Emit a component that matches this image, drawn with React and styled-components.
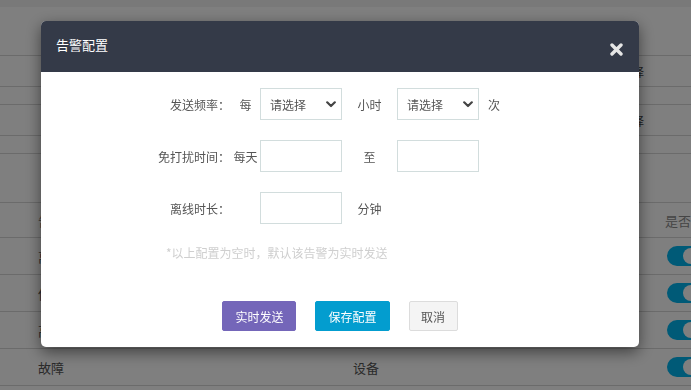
import React from 'react'
import styled, { createGlobalStyle } from 'styled-components'

const GlobalStyle = createGlobalStyle`
  html, body {
    margin: 0;
    padding: 0;
    background: #fff;
  }
  body {
    font-family: "Noto Sans CJK SC", "Noto Sans", sans-serif;
    font-size: 12px;
    color: #555;
    overflow: hidden;
  }
`

const rows = [
    { type: '离线', target: '设备' },
    { type: '低电量', target: '设备' },
    { type: '高温', target: '设备' },
    { type: '故障', target: '设备' },
]

function Chevron() {
    return (
        <svg width="10" height="7" viewBox="0 0 10 7">
            <path d="M1.2 1.3 L5 5 L8.8 1.3" fill="none" stroke="#444" strokeWidth="2.2" strokeLinecap="round" strokeLinejoin="round" />
        </svg>
    )
}

function Select() {
    return (
        <SelectWrap>
            <NativeSelect defaultValue="">
                <option value="">请选择</option>
                <option value="1">1</option>
                <option value="2">2</option>
            </NativeSelect>
            <Arrow><Chevron /></Arrow>
        </SelectWrap>
    )
}

function App() {
    return (
        <>
            <GlobalStyle />
            <Page>
                <TopBand />
                <BgRow h={49} />
                <BgRow h={31}><CutText>请选择</CutText></BgRow>
                <BgRow h={18} />
                <BgRow h={31}><CutText>请选择</CutText></BgRow>
                <BgRow h={18} />
                <BgRow h={49} />
                <TableRow head>
                    <span>告警类型</span>
                    <span>告警对象</span>
                    <span>是否启用</span>
                </TableRow>
                {rows.map(r => (
                    <TableRow key={r.type}><span>{r.type}</span><span>{r.target}</span><Toggle /></TableRow>
                ))}
            </Page>

            <Overlay>
                <Modal>
                    <Header>
                        <Title>告警配置</Title>
                        <Close aria-label="close">
                            <svg width="13" height="13" viewBox="0 0 13 13">
                                <path d="M2 2 L11 11 M11 2 L2 11" stroke="#e6e6e6" strokeWidth="3.4" strokeLinecap="round" />
                            </svg>
                        </Close>
                    </Header>
                    <Body>
                        <FormGrid>
                            <Label>发送频率：</Label>
                            <Prefix>每</Prefix>
                            <Select />
                            <Mid>小时</Mid>
                            <Select />
                            <Suffix>次</Suffix>

                            <Label>免打扰时间：</Label>
                            <Prefix>每天</Prefix>
                            <Input />
                            <Mid>至</Mid>
                            <Input />
                            <Suffix />

                            <Label>离线时长：</Label>
                            <Prefix />
                            <Input />
                            <Mid>分钟</Mid>
                            <span />
                            <Suffix />
                        </FormGrid>
                        <Hint>*以上配置为空时，默认该告警为实时发送</Hint>
                        <Footer>
                            <Button kind="purple">实时发送</Button>
                            <Button kind="blue">保存配置</Button>
                            <Button kind="plain">取消</Button>
                        </Footer>
                    </Body>
                </Modal>
            </Overlay>
        </>
    )
}

export default App;


const Page = styled.div`
    width: 100%;
    height: 390px;
    background: #fff;
`
const TopBand = styled.div`
    height: 7px;
    background: #f3f3f3;
`
const BgRow = styled.div`
    height: ${props => props.h}px;
    box-sizing: border-box;
    border-bottom: 1px solid #d6d6d6;
    display: flex;
    align-items: center;
    padding-left: 608px;
    color: #444;
    font-size: 12px;
`
const CutText = styled.span`
    white-space: nowrap;
`
const TableRow = styled.div`
    height: ${props => props.head ? 35 : 37}px;
    box-sizing: border-box;
    border-bottom: 1px solid #d6d6d6;
    display: grid;
    grid-template-columns: 315px 312px 1fr;
    align-items: center;
    padding-left: 38px;
    font-size: 13px;
    color: ${props => props.head ? '#8a8a8a' : '#555'};
    white-space: nowrap;
`
const Toggle = styled.div`
    width: 40px;
    height: 20px;
    border-radius: 10px;
    background: #00b4ee;
    position: relative;
    margin-left: 2px;
    &::after{
        content: '';
        position: absolute;
        top: 2px;
        left: 16px;
        width: 16px;
        height: 16px;
        border-radius: 50%;
        background: #fff;
    }
`

const Overlay = styled.div`
    position: fixed;
    inset: 0;
    background: rgba(0, 0, 0, .5);
    padding: 21px 0 0 41px;
    box-sizing: border-box;
`
const Modal = styled.div`
    width: 598px;
    background: #fff;
    border-radius: 5px;
    overflow: hidden;
    box-shadow: 0 5px 15px rgba(0, 0, 0, .5);
`
const Header = styled.div`
    height: 51px;
    background: #343a48;
    display: flex;
    align-items: center;
    justify-content: space-between;
    padding: 0 16px 0 15px;
`
const Title = styled.div`
    color: #fff;
    font-size: 13px;
    margin-top: -4px;
`
const Close = styled.button`
    border: 0;
    background: none;
    padding: 0;
    margin-top: 5px;
    display: flex;
    cursor: pointer;
`
const Body = styled.div`
    padding: 16px 0 16px;
`
const FormGrid = styled.div`
    display: grid;
    grid-template-columns: 189px 30px 82px 55px 82px auto;
    row-gap: 20px;
    align-items: center;
    color: #555;
    font-size: 12px;
`
const Label = styled.div`
    text-align: right;
    white-space: nowrap;
`
const Prefix = styled.div`
    text-align: center;
    white-space: nowrap;
    padding-left: 1px;
`
const Mid = styled.div`
    text-align: center;
`
const Suffix = styled.div`
    padding-left: 9px;
`
const Input = styled.input`
    width: 82px;
    height: 32px;
    box-sizing: border-box;
    border: 1px solid #d2dddd;
    outline: none;
    padding: 0 8px;
    font: inherit;
`
const SelectWrap = styled.div`
    position: relative;
    width: 82px;
    height: 32px;
`
const NativeSelect = styled.select`
    appearance: none;
    width: 100%;
    height: 100%;
    box-sizing: border-box;
    border: 1px solid #d2dddd;
    border-radius: 0;
    background: #fff;
    padding: 0 0 0 9px;
    font-family: inherit;
    font-size: 12px;
    color: #555;
    outline: none;
`
const Arrow = styled.span`
    position: absolute;
    right: 6px;
    top: 13px;
    display: flex;
    pointer-events: none;
`
const Hint = styled.div`
    margin-top: 20px;
    padding-left: 125px;
    color: #cfcfcf;
    font-size: 12px;
    line-height: 17px;
`
const Footer = styled.div`
    margin-top: 40px;
    display: flex;
    justify-content: center;
    gap: 19px;
`
const colors = {
    purple: { bg: '#7466b9', fg: '#fff', border: '#7466b9' },
    blue: { bg: '#039dcf', fg: '#fff', border: '#039dcf' },
    plain: { bg: '#f4f4f4', fg: '#555', border: '#dcdcdc' },
}
const Button = styled.button`
    height: 30px;
    box-sizing: border-box;
    padding: 0 ${props => props.kind === 'plain' ? 11.5 : 12}px;
    border-radius: 2px;
    border: 1px solid ${props => colors[props.kind].border};
    background: ${props => colors[props.kind].bg};
    color: ${props => colors[props.kind].fg};
    font-family: inherit;
    font-size: 12px;
    cursor: pointer;
`
